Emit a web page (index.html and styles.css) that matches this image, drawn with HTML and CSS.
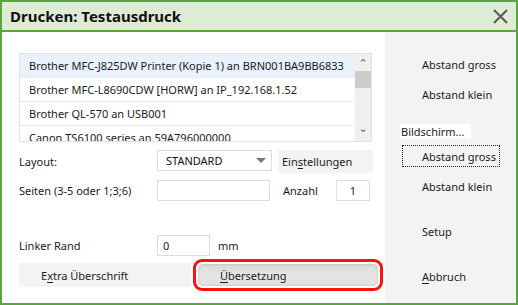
FILE: index.html
```html
<!DOCTYPE html>
<html lang="de">
<head>
    <meta charset="UTF-8">
    <title>Drucken: Testausdruck</title>
    <link rel="stylesheet" href="styles.css">
</head>
<body>

<div class="dialog">
    <div class="titlebar">
        <span class="title">Drucken: Testausdruck</span>
        <svg class="close" width="15" height="15" viewBox="0 0 15 15">
            <path d="M1 1 L14 14 M14 1 L1 14" stroke="#5a5a5a" stroke-width="2" fill="none"/>
        </svg>
    </div>

    <div class="content">
        <div class="main">
            <!-- Druckerliste -->
            <div class="printer-list">
                <div class="rows">
                    <div class="row selected">Brother MFC-J825DW Printer (Kopie 1) an BRN001BA9BB6833</div>
                    <div class="row">Brother MFC-L8690CDW [HORW] an IP_192.168.1.52</div>
                    <div class="row">Brother QL-570 an USB001</div>
                    <div class="row">Canon TS6100 series an 59A796000000</div>
                </div>
                <div class="scrollbar">
                    <span class="arrow">&#8963;</span>
                    <span class="thumb"></span>
                    <span class="track"></span>
                    <span class="arrow down">&#8964;</span>
                </div>
            </div>

            <div class="form-row row-layout">
                <label class="label">Layout:</label>
                <div class="select">
                    <span class="select-value">STANDARD</span>
                    <span class="select-arrow"></span>
                </div>
                <button class="btn-settings">Ein<u>s</u>tellungen</button>
            </div>

            <div class="form-row row-pages">
                <label class="label">Seiten (3-5 oder 1;3;6)</label>
                <input class="input input-pages" type="text" value="">
                <span class="count-label">Anzahl</span>
                <input class="input input-count" type="text" value="1">
            </div>

            <div class="form-row row-margin">
                <label class="label">Linker Rand</label>
                <input class="input input-margin" type="text" value="0">
                <span class="unit">mm</span>
            </div>

            <div class="form-row row-extra">
                <button class="btn-extra">E<u>x</u>tra Überschrift</button>
                <div class="highlight">
                    <button class="btn-translate"><u>Ü</u>bersetzung</button>
                </div>
            </div>
        </div>

        <div class="side">
            <button class="side-btn first">Abstand gross</button>
            <button class="side-btn">Abstand klein</button>
            <span class="side-caption">Bildschirm...</span>
            <button class="side-btn focused">Abstand gross</button>
            <button class="side-btn">Abstand klein</button>
            <button class="side-btn gap">Setup</button>
            <button class="side-btn gap"><u>A</u>bbruch</button>
        </div>
    </div>
</div>

</body>
</html>
```

FILE: styles.css
```css
body {
    margin: 0;
    padding: 0;
    font-family: 'Noto Sans', 'Open Sans', sans-serif;
    font-size: 11px;
    color: #1b1b1b;
    background: white;
}
button, input {
    font-family: inherit;
    font-size: inherit;
    color: inherit;
}
u {
    text-decoration-thickness: 1px;
    text-underline-offset: 2px;
}
.dialog {
    width: 518px;
    height: 305px;
    box-sizing: border-box;
    border: 2px solid #5ba53d;
    display: flex;
    flex-direction: column;
}
.titlebar {
    height: 28px;
    background: #deebd5;
    border-bottom: 2px solid #5ba53d;
    display: flex;
    align-items: center;
    justify-content: space-between;
    padding: 0 8px 0 8px;
    flex-shrink: 0;
}
.title {
    font-size: 15px;
    font-weight: bold;
    color: #111;
}
.close {
    margin-top: 1px;
}
.content {
    flex: 1;
    display: flex;
}
.main {
    width: 383px;
    background: white;
    padding: 21px 0 0 17px;
    box-sizing: border-box;
}
.side {
    flex: 1;
    background: #f3f3f3;
    display: flex;
    flex-direction: column;
    align-items: flex-start;
    padding: 21px 0 0 15px;
}

/* Druckerliste */
.printer-list {
    width: 353px;
    height: 89px;
    box-sizing: border-box;
    border: 1px solid #e3e3e3;
    display: flex;
    overflow: hidden;
}
.rows {
    flex: 1;
    overflow: hidden;
}
.row {
    height: 24px;
    line-height: 23px;
    padding-left: 9px;
    border-bottom: 1px solid #ececec;
    white-space: nowrap;
    box-sizing: border-box;
}
.row.selected {
    background: #e8f1fc;
}
.scrollbar {
    width: 16px;
    background: #f0f0f0;
    display: flex;
    flex-direction: column;
    align-items: stretch;
}
.scrollbar .arrow {
    height: 17px;
    line-height: 20px;
    text-align: center;
    color: #606060;
    font-size: 11px;
    font-family: 'DejaVu Sans', sans-serif;
}
.scrollbar .arrow.down {
    line-height: 10px;
}
.thumb {
    height: 17px;
    background: #cdcdcd;
}
.track {
    flex: 1;
}

/* Formular */
.form-row {
    display: flex;
    align-items: center;
}
.label {
    width: 138px;
    flex-shrink: 0;
    white-space: nowrap;
}
.row-layout {
    margin-top: 8px;
    height: 22px;
}
.select {
    width: 115px;
    height: 21px;
    box-sizing: border-box;
    border: 1px solid #dcdcdc;
    display: flex;
    align-items: center;
    align-self: flex-start;
}
.select-value {
    flex: 1;
    padding-left: 8px;
    color: #111;
}
.select-arrow {
    width: 0;
    height: 0;
    border-left: 5px solid transparent;
    border-right: 5px solid transparent;
    border-top: 5px solid #777;
    margin-right: 5px;
}
.btn-settings {
    margin-left: 6px;
    width: 95px;
    height: 23px;
    background: #f3f3f3;
    border: none;
    text-align: left;
    padding: 0 0 0 4px;
}
.row-pages {
    margin-top: 8px;
    height: 21px;
}
.input {
    height: 21px;
    box-sizing: border-box;
    border: 1px solid #dcdcdc;
    padding: 0 5px;
    outline: none;
}
.input-pages {
    width: 113px;
}
.count-label {
    margin-left: 13px;
    width: 53px;
}
.input-count {
    width: 34px;
    text-align: center;
}
.row-margin {
    margin-top: 34px;
    height: 21px;
}
.input-margin {
    width: 53px;
}
.unit {
    margin-left: 8px;
}
.row-extra {
    margin-top: 3px;
    height: 32px;
}
.btn-extra {
    width: 172px;
    height: 24px;
    background: #f3f3f3;
    border: none;
    text-align: left;
    padding: 0 0 0 22px;
}
.highlight {
    margin-left: 2px;
    width: 190px;
    height: 32px;
    box-sizing: border-box;
    border: 3px solid #ff1010;
    border-radius: 9px;
    padding: 2px;
    display: flex;
}
.btn-translate {
    flex: 1;
    border: none;
    border-radius: 5px;
    background: linear-gradient(to bottom, #d9d9d9, #e6e6e6 50%, #e1e1e1);
    box-shadow: inset 0 0 3px rgba(0, 0, 0, 0.15);
    text-align: left;
    padding: 0 0 0 22px;
}

/* rechte Spalte */
.side-btn {
    width: 98px;
    height: 22px;
    background: transparent;
    border: 1px dotted transparent;
    text-align: left;
    padding: 0 0 0 19px;
    margin-top: 8px;
    margin-left: 2px;
    white-space: nowrap;
}
.side-btn.first {
    margin-top: 0;
}
.side-btn.focused {
    border-color: #222;
    margin-top: 6px;
}
.side-btn.gap {
    margin-top: 23px;
}
.side-caption {
    background: white;
    margin-top: 19px;
    height: 15px;
    line-height: 15px;
    padding: 0 1px;
    width: 69px;
    white-space: nowrap;
}
```
